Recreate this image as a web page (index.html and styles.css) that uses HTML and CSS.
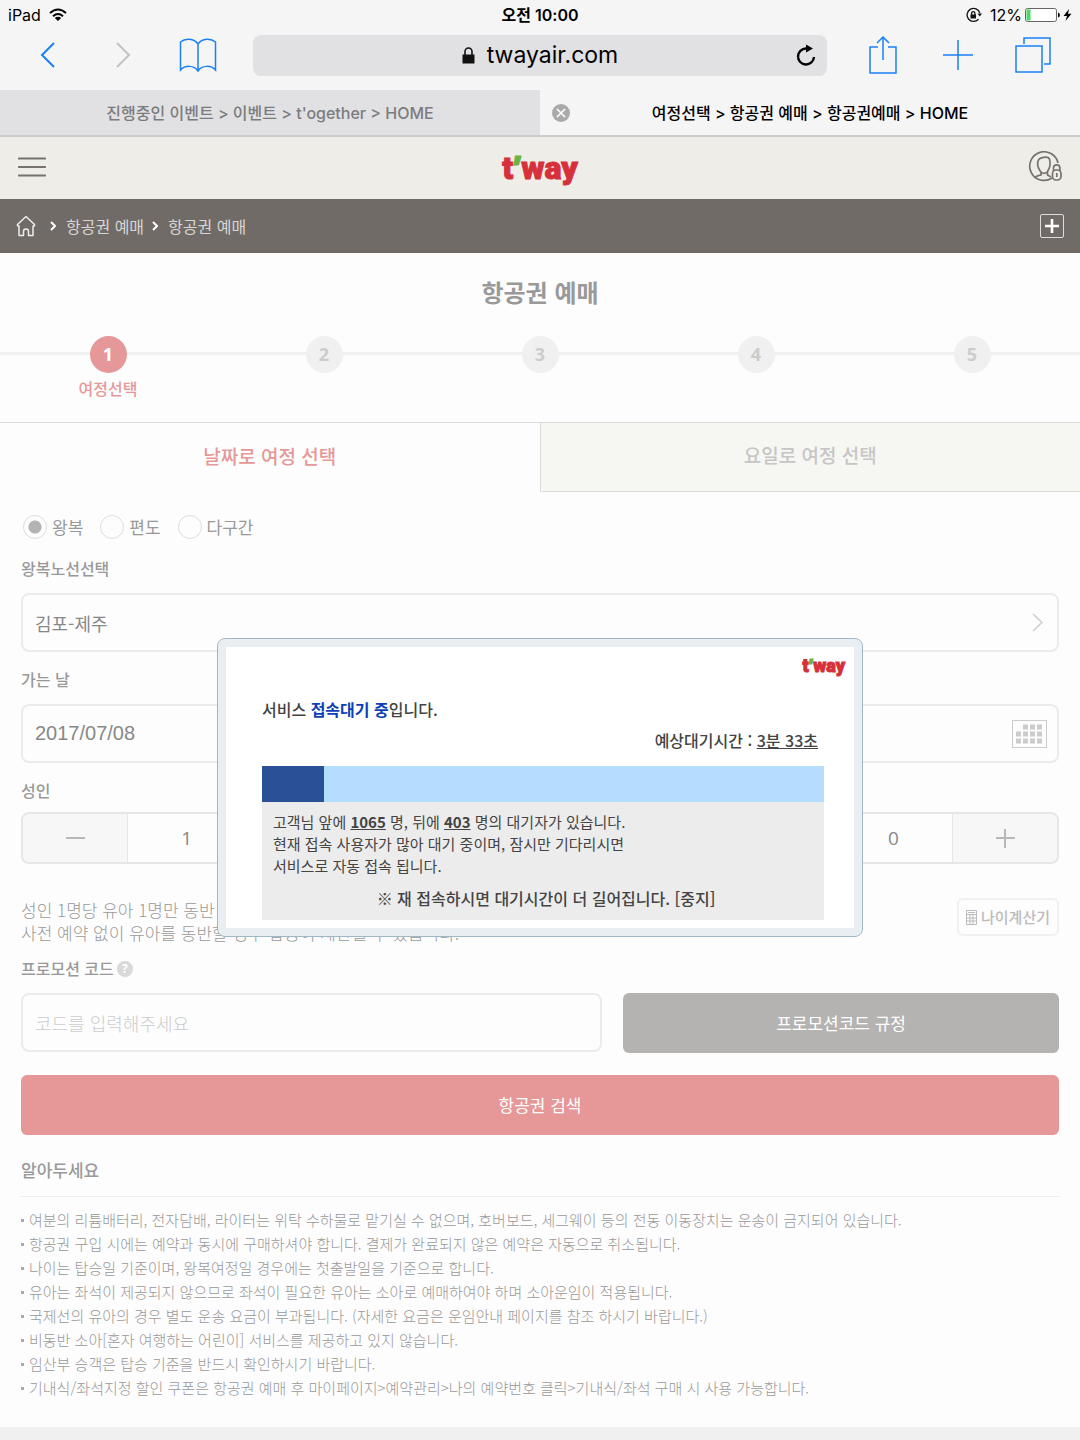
FILE: index.html
```html
<!DOCTYPE html>
<html lang="ko">
<head>
    <meta charset="UTF-8">
    <meta name="viewport" content="width=device-width, initial-scale=1.0">
    <title>여정선택 &gt; 항공권 예매 &gt; 항공권예매 &gt; HOME</title>
    <link rel="stylesheet" href="styles.css">
</head>
<body>
    <!-- 상태바 -->
    <div class="status">
        <div class="status-left">
            <span>iPad</span>
            <svg width="18" height="14" viewBox="0 0 18 14" fill="none" stroke="#000" stroke-width="2"><path d="M1 5Q9-2 17 5M4 8.200Q9 3.800 14 8.200"/><path d="M9 13L5.800 10Q9 7.400 12.200 10Z" fill="#000" stroke="none"/></svg>
        </div>
        <strong class="status-time">오전 10:00</strong>
        <div class="status-right">
            <svg class="rotate-lock" width="16" height="16" viewBox="0 0 16 16" fill="none" stroke="#111" stroke-width="1.300"><path d="M13.800 6A6.500 6.500 0 1 0 12.500 12.200"/><path d="M11.600 6.500H16L13.800 9.500Z" fill="#111" stroke="none"/><path d="M4.500 7.500h5.500v4h-5.500z" fill="#111" stroke="none"/><path d="M5.600 8V6.200a1.650 1.650 0 0 1 3.300 0V8"/></svg>
            <span>12%</span>
            <svg width="35" height="14" viewBox="0 0 35 14"><rect x=".5" y=".5" width="31" height="13" rx="2" fill="#fff" stroke="#666"/><path d="M1.500 1.500h4v11h-4z" fill="#4cd964"/><path d="M33 4.500q2 .5 2 2.500t-2 2.500z" fill="#111"/></svg>
            <svg width="9" height="14" viewBox="0 0 9 14"><path d="M6 1L.5 8H4L2.500 13L8.500 5.800H5Z" fill="#000"/></svg>
        </div>
    </div>

    <!-- 브라우저 도구막대 -->
    <div class="toolbar">
        <button class="tool" aria-label="뒤로"><svg width="16" height="28" viewBox="0 0 16 28" class="bold"><path d="M14 2L2 14L14 26"/></svg></button>
        <button class="tool off" aria-label="앞으로"><svg width="16" height="28" viewBox="0 0 16 28" class="bold"><path d="M2 2L14 14L2 26"/></svg></button>
        <button class="tool" aria-label="책갈피"><svg width="38" height="36" viewBox="0 0 38 36"><path d="M19 7C15 1 6 1 1.500 5V33C6 28 15 28 19 34C23 28 32 28 36.500 33V5C32 1 23 1 19 7V34"/></svg></button>
        <div class="address">
            <div class="address-url">
                <svg width="13" height="17" viewBox="0 0 13 17"><path d="M.5 7.500h12v9H.5z" fill="#111"/><path d="M3 8V4.500a3.500 3.500 0 0 1 7 0V8" fill="none" stroke="#111" stroke-width="1.600"/></svg>
                <span>twayair.com</span>
            </div>
            <button class="reload" aria-label="새로고침"><svg width="22" height="24" viewBox="0 0 22 24"><path d="M13 5.500H11A8 8 0 1 0 19 14" fill="none" stroke="#000" stroke-width="2.400"/><path d="M11 1.500L18 5.500L11 9.500Z"/></svg></button>
        </div>
        <button class="tool" aria-label="공유"><svg width="30" height="40" viewBox="0 0 30 40"><path d="M10 12H2V38H28V12H20M15 25V2M9 8L15 2L21 8"/></svg></button>
        <button class="tool" aria-label="새 탭"><svg width="30" height="30" viewBox="0 0 30 30"><path d="M15 0V30M0 15H30"/></svg></button>
        <button class="tool" aria-label="탭 보기"><svg width="36" height="36" viewBox="0 0 36 36"><path d="M1 9H27V35H1ZM9 7V1H35V27H29"/></svg></button>
    </div>

    <div class="browser-tabs">
        <div class="browser-tab"><span>진행중인 이벤트 &gt; 이벤트 &gt; t'ogether &gt; HOME</span></div>
        <div class="browser-tab current">
            <button class="tab-close" aria-label="탭 닫기"><svg width="18" height="18" viewBox="0 0 18 18"><circle cx="9" cy="9" r="9" fill="#aaa"/><path d="M5 5L13 13M13 5L5 13" stroke="#fff" stroke-width="1.700"/></svg></button>
            <span>여정선택 &gt; 항공권 예매 &gt; 항공권예매 &gt; HOME</span>
        </div>
    </div>

    <header class="header">
        <button class="menu-btn" aria-label="메뉴"><svg width="28" height="22" viewBox="0 0 28 22"><path d="M1 2.500H27M1 11H27M1 19.500H27" stroke="#77726e" stroke-width="2.200" stroke-linecap="round"/></svg></button>
        <a href="#" class="logo">t<span>’</span>way</a>
        <button class="user-btn" aria-label="로그인">
            <svg width="34" height="32" viewBox="0 0 34 32" fill="none" stroke="#77726e" stroke-width="1.700">
                <path d="M30 12A14.300 14.300 0 1 0 24 27"/>
                <path d="M10 10C11 6 20 5 21.500 8C22.500 12 22 17 19.500 20.500Q16 24 12.500 20.500C10 17 9 13 10 10ZM13 21V24Q8 25 6.500 27M19.500 21V24L23 26"/>
                <rect x="24.500" y="19" width="8.500" height="10" rx="3.500"/>
                <path d="M25.500 20V17a3.200 3.200 0 0 1 6.400 0v3M28.800 22v4"/>
            </svg>
        </button>
    </header>

    <nav class="breadcrumb">
        <a href="#" class="home" aria-label="홈"><svg width="20" height="22" viewBox="0 0 20 22" fill="none" stroke="#eee" stroke-width="1.500" stroke-linejoin="round"><path d="M10 1.500L1.500 9.500Q1 11 3 11V20.500H7.500V16.500Q7.500 14 10 14T12.500 16.500V20.500H17V11Q19 11 18.500 9.500Z"/></svg></a>
        <svg class="arrow" width="6" height="10" viewBox="0 0 6 10"><path d="M1 1L5 5L1 9"/></svg>
        <a href="#">항공권 예매</a>
        <svg class="arrow" width="6" height="10" viewBox="0 0 6 10"><path d="M1 1L5 5L1 9"/></svg>
        <a href="#">항공권 예매</a>
        <button class="more-btn" aria-label="더보기"><svg width="24" height="24" viewBox="0 0 24 24" fill="none" stroke="#fff"><rect x=".5" y=".5" width="23" height="23" rx="1.500" stroke="#ddd"/><path d="M12 5V19M5 12H19" stroke-width="2.600"/></svg></button>
    </nav>

    <main class="page">
        <h1 class="title">항공권 예매</h1>
        <ol class="steps">
            <li class="step on"><b>1</b><span>여정선택</span></li>
            <li class="step"><b>2</b></li>
            <li class="step"><b>3</b></li>
            <li class="step"><b>4</b></li>
            <li class="step"><b>5</b></li>
        </ol>
        <div class="tabs">
            <button class="tab on">날짜로 여정 선택</button>
            <button class="tab">요일로 여정 선택</button>
        </div>

        <form class="form">
            <div class="radios">
                <label><input type="radio" name="trip" checked>왕복</label>
                <label><input type="radio" name="trip">편도</label>
                <label><input type="radio" name="trip">다구간</label>
            </div>

            <label class="label" for="route">왕복노선선택</label>
            <div class="field">
                <select id="route"><option>김포-제주</option></select>
                <svg class="chevron" width="11" height="19" viewBox="0 0 11 19"><path d="M1 1L10 9.500L1 18" fill="none" stroke="#ccc" stroke-width="1.500"/></svg>
            </div>

            <label class="label" for="date">가는 날</label>
            <div class="field">
                <input type="text" id="date" class="latin" value="2017/07/08">
                <svg width="35" height="28" viewBox="0 0 35 28" stroke="#ccc" fill="none"><rect x=".5" y=".5" width="34" height="27"/><path d="M11 7H31" stroke-width="5" stroke-dasharray="5 2"/><path d="M4 14H31M4 21H31" stroke-width="5" stroke-dasharray="5 2"/></svg>
            </div>

            <div class="people">
                <div>
                    <label class="label" for="adult">성인</label>
                    <div class="counter">
                        <button type="button" class="minus" aria-label="성인 빼기"></button>
                        <input type="text" id="adult" value="1">
                        <button type="button" class="plus" aria-label="성인 더하기"></button>
                    </div>
                </div>
                <div>
                    <label class="label" for="child">소아</label>
                    <div class="counter">
                        <button type="button" class="minus" aria-label="소아 빼기"></button>
                        <input type="text" id="child" value="0">
                        <button type="button" class="plus" aria-label="소아 더하기"></button>
                    </div>
                </div>
                <div>
                    <label class="label" for="infant">유아</label>
                    <div class="counter">
                        <button type="button" class="minus" aria-label="유아 빼기"></button>
                        <input type="text" id="infant" value="0">
                        <button type="button" class="plus" aria-label="유아 더하기"></button>
                    </div>
                </div>
            </div>

            <div class="notice">
                <p>성인 1명당 유아 1명만 동반 가능합니다.<br>사전 예약 없이 유아를 동반할 경우 탑승이 제한될 수 있습니다.</p>
                <button type="button" class="age-btn"><svg width="11" height="15" viewBox="0 0 11 15" fill="none" stroke="#bbb"><path d="M.5.5h10v14H.5zM.5 4.500h10M.5 8h10M.5 11h10M4 4.500v10M7 4.500v10M2 2.500h7"/></svg>나이계산기</button>
            </div>

            <div class="promo-label">
                <label class="label" for="promo">프로모션 코드</label>
                <button type="button" class="help" aria-label="도움말">?</button>
            </div>
            <div class="promo">
                <div class="field"><input type="text" id="promo" placeholder="코드를 입력해주세요"></div>
                <button type="button" class="btn gray">프로모션코드 규정</button>
            </div>
            <button type="button" class="btn red">항공권 검색</button>
        </form>

        <section class="info">
            <h2>알아두세요</h2>
            <ul>
                <li>여분의 리튬배터리, 전자담배, 라이터는 위탁 수하물로 맡기실 수 없으며, 호버보드, 세그웨이 등의 전동 이동장치는 운송이 금지되어 있습니다.</li>
                <li>항공권 구입 시에는 예약과 동시에 구매하셔야 합니다. 결제가 완료되지 않은 예약은 자동으로 취소됩니다.</li>
                <li>나이는 탑승일 기준이며, 왕복여정일 경우에는 첫출발일을 기준으로 합니다.</li>
                <li>유아는 좌석이 제공되지 않으므로 좌석이 필요한 유아는 소아로 예매하여야 하며 소아운임이 적용됩니다.</li>
                <li>국제선의 유아의 경우 별도 운송 요금이 부과됩니다. (자세한 요금은 운임안내 페이지를 참조 하시기 바랍니다.)</li>
                <li>비동반 소아[혼자 여행하는 어린이] 서비스를 제공하고 있지 않습니다.</li>
                <li>임산부 승객은 탑승 기준을 반드시 확인하시기 바랍니다.</li>
                <li>기내식/좌석지정 할인 쿠폰은 항공권 예매 후 마이페이지&gt;예약관리&gt;나의 예약번호 클릭&gt;기내식/좌석 구매 시 사용 가능합니다.</li>
            </ul>
        </section>

        <!-- 접속대기 팝업 -->
        <div class="popup" role="dialog" aria-label="접속대기">
            <div class="logo small">t<span>’</span>way</div>
            <div class="popup-body">
                <p class="popup-title">서비스 <em>접속대기 중</em>입니다.</p>
                <p class="popup-time">예상대기시간 : <u>3분 33초</u></p>
                <div class="bar"><div class="bar-fill" style="width: 11%"></div></div>
                <div class="popup-msg">
                    <p>고객님 앞에 <u>1065</u> 명, 뒤에 <u>403</u> 명의 대기자가 있습니다.<br>현재 접속 사용자가 많아 대기 중이며, 잠시만 기다리시면<br>서비스로 자동 접속 됩니다.</p>
                    <p class="popup-warn">※ 재 접속하시면 대기시간이 더 길어집니다. <a href="#">[중지]</a></p>
                </div>
            </div>
        </div>
    </main>
    <footer class="footer"></footer>
</body>
</html>
```
FILE: styles.css
```css
* {
    margin: 0;
    padding: 0;
    box-sizing: border-box;
}
body {
    min-height: 100vh;
    display: flex;
    flex-direction: column;
    background-color: #fdfdfd;
    font-family: "Noto Sans CJK KR", sans-serif;
    font-size: 16px;
    line-height: 24px;
    color: #999;
}
button, input, select {
    font: inherit;
    color: inherit;
    border: 0;
    background: none;
    outline: none;
    appearance: none;
}
button {
    cursor: pointer;
}
a {
    color: inherit;
    text-decoration: none;
}
svg {
    display: block;
    flex-shrink: 0;
}

/* 브라우저 */
.status, .toolbar, .browser-tabs {
    background-color: #f5f5f6;
    color: #000;
    font-family: Inter, "Noto Sans CJK KR", sans-serif;
}
.status {
    height: 30px;
    padding: 0 8px;
    display: grid;
    grid-template-columns: 1fr auto 1fr;
    align-items: center;
}
.status-left, .status-right {
    display: flex;
    align-items: center;
    gap: 8px;
}
.status-time {
    font-weight: 600;
}
.status-right {
    justify-content: flex-end;
    gap: 3px;
}
.rotate-lock {
    margin-right: 5px;
}
.toolbar {
    height: 60px;
    padding: 0 10px 10px;
    display: flex;
    align-items: center;
}
.tool {
    width: 75px;
    height: 44px;
    display: flex;
    align-items: center;
    justify-content: center;
}
.tool svg {
    fill: none;
    stroke: #1a80f5;
    stroke-width: 1.5;
}
.tool .bold {
    stroke-width: 2;
}
.off .bold {
    stroke: #c3c3c5;
}
.address {
    flex: 1;
    height: 41px;
    margin: 0 18px;
    display: flex;
    align-items: center;
    border-radius: 8px;
    background-color: #e1e1e3;
}
.address-url {
    flex: 1;
    padding-left: 32px;
    display: flex;
    align-items: center;
    justify-content: center;
    gap: 12px;
    font-size: 23px;
}
.reload {
    margin-right: 10px;
}
.browser-tabs {
    height: 47px;
    display: grid;
    grid-template-columns: 1fr 1fr;
    border-bottom: 2px solid #ccc;
}
.browser-tab {
    display: flex;
    align-items: center;
    justify-content: center;
    background-color: #e1e1e3;
    color: #7c7c7e;
    font-weight: 500;
}
.current {
    padding: 0 30px 0 12px;
    background-color: #f5f5f6;
    color: #000;
}
.current span {
    flex: 1;
    text-align: center;
}

/* 헤더 */
.header {
    height: 62px;
    padding: 0 18px 2px;
    display: grid;
    grid-template-columns: 1fr auto 1fr;
    align-items: center;
    background-color: #eeede8;
}
.menu-btn {
    justify-self: start;
}
.user-btn {
    justify-self: end;
}
.logo {
    font-family: Roboto, sans-serif;
    font-size: 32px;
    line-height: 40px;
    font-weight: 900;
    color: #d6303a;
    -webkit-text-stroke: 1px #d6303a;
}
.logo span {
    font-family: "Open Sans", sans-serif;
    font-weight: 800;
    color: #6cb33f;
    -webkit-text-stroke: 1px #6cb33f;
}
.breadcrumb {
    height: 54px;
    padding: 0 16px;
    display: flex;
    align-items: center;
    background-color: #706b67;
    color: #d8d6d4;
}
.home {
    margin-right: 6px;
}
.arrow {
    margin: 0 10px 0 8px;
    fill: none;
    stroke: #fff;
    stroke-width: 2;
}
.more-btn {
    margin-left: auto;
}

/* 본문 */
.page {
    flex: 1;
    position: relative;
}
.title {
    padding: 24px 0;
    font-size: 24px;
    line-height: 30px;
    font-weight: 700;
    text-align: center;
}
.steps {
    height: 91px;
    padding-top: 5px;
    display: flex;
    list-style: none;
    background: linear-gradient(#f0f0f0, #f0f0f0) 0 21px / 100% 3px no-repeat;
}
.step {
    flex: 1;
    display: flex;
    flex-direction: column;
    align-items: center;
    gap: 3px;
    font-weight: 500;
}
.step b {
    width: 37px;
    height: 37px;
    border-radius: 50%;
    background-color: #f0f0f0;
    color: #ccc;
    font-family: "Open Sans", sans-serif;
    font-size: 18px;
    line-height: 37px;
    text-align: center;
}
.step.on {
    color: #e69898;
}
.step.on b {
    background-color: #e69898;
    color: #fff;
}
.tabs {
    height: 70px;
    display: flex;
    border-top: 1px solid #ddddd9;
}
.tab {
    flex: 1;
    padding-bottom: 4px;
    font-size: 19px;
    font-weight: 500;
    color: #c6c6c4;
    background-color: #f6f6f3;
    border-left: 1px solid #ddddd9;
    border-bottom: 1px solid #ddddd9;
}
.tab.on {
    color: #e69898;
    background: none;
    border: 0;
}
.form, .info {
    padding: 0 21px;
}
.radios {
    padding: 23px 2px 17px;
    display: flex;
    gap: 17px;
    font-size: 17px;
}
.radios label {
    display: flex;
    align-items: center;
    gap: 5px;
}
.radios input {
    width: 24px;
    height: 24px;
    border: 1px solid #ddd;
    border-radius: 50%;
}
.radios input:checked {
    background: radial-gradient(#b3b3b1 6px, transparent 7px);
}
.label {
    display: block;
    margin-bottom: 13px;
    font-weight: 500;
}
.field {
    height: 59px;
    margin-bottom: 15px;
    padding: 0 10px 0 12px;
    display: flex;
    align-items: center;
    border: 2px solid #ebebeb;
    border-radius: 8px;
    font-size: 18px;
    color: #888;
}
.field select, .field input {
    flex: 1;
    min-width: 0;
    height: 100%;
}
.field .latin {
    font-family: "Liberation Sans", sans-serif;
    font-size: 20px;
}
.field input::placeholder {
    color: #ccc;
    font-weight: 300;
}
.chevron {
    margin-right: 4px;
}
.people {
    display: grid;
    grid-template-columns: repeat(3, 1fr);
    gap: 22px;
}
.people .label {
    margin-bottom: 10px;
}
.counter {
    height: 52px;
    display: grid;
    grid-template-columns: 104px 1fr 104px;
    border: 2px solid #e6e6e6;
    border-radius: 8px;
    overflow: hidden;
    font-family: "Open Sans", sans-serif;
    font-size: 19px;
    color: #888;
}
.counter input {
    min-width: 0;
    text-align: center;
    border: solid #e6e6e6;
    border-width: 0 1px;
}
.minus, .plus {
    background: linear-gradient(#b8b8b8, #b8b8b8) center / 19px 2px no-repeat #f7f7f7;
}
.plus {
    background: linear-gradient(#b8b8b8, #b8b8b8) center / 19px 2px no-repeat, linear-gradient(#b8b8b8, #b8b8b8) center / 2px 19px no-repeat #f7f7f7;
}
.notice {
    padding: 34px 0 12px;
    display: flex;
    justify-content: space-between;
    align-items: flex-start;
}
.notice p {
    font-size: 17px;
    line-height: 23px;
    font-weight: 300;
}
.age-btn {
    height: 38px;
    padding: 0 7px;
    display: flex;
    align-items: center;
    gap: 4px;
    border: 2px solid #f0f0f0;
    border-radius: 6px;
    font-size: 15px;
    font-weight: 500;
    color: #bbb;
}
.promo-label {
    display: flex;
    gap: 3px;
}
.help {
    width: 16px;
    height: 16px;
    margin-top: 5px;
    border-radius: 50%;
    background-color: #d9d9d9;
    color: #fff;
    font-family: "Open Sans", sans-serif;
    font-size: 12px;
    line-height: 16px;
    font-weight: 700;
}
.promo {
    margin-bottom: 22px;
    display: grid;
    grid-template-columns: 4fr 3fr;
    gap: 21px;
}
.promo .field {
    margin: 0;
}
.btn {
    height: 60px;
    border-radius: 6px;
    font-size: 17px;
    color: #fff;
}
.gray {
    background-color: #b4b3b1;
}
.red {
    width: 100%;
    background-color: #e69898;
}

/* 알아두세요 */
.info {
    padding-top: 23px;
}
.info h2 {
    padding-bottom: 14px;
    border-bottom: 1px solid #eee;
    font-size: 17px;
    font-weight: 500;
}
.info ul {
    padding: 11px 0 20px;
    list-style: none;
    font-size: 15px;
    font-weight: 300;
}
.info li {
    display: flex;
    align-items: center;
    gap: 5px;
}
.info li::before {
    content: "";
    width: 3px;
    height: 3px;
    flex-shrink: 0;
    background-color: #aaa;
}
.footer {
    height: 13px;
    background-color: #f0f0f0;
}

/* 팝업 */
.popup {
    position: absolute;
    top: 385px;
    left: 50%;
    width: 646px;
    max-width: 100%;
    transform: translate(-50%, 0);
    border: 1px solid #a0b8c6;
    border-radius: 8px;
    background-color: #fff;
    box-shadow: inset 0 0 0 8px #e9eef2;
    color: #444;
}
.small {
    padding: 14px 17px 0 0;
    font-size: 18px;
    line-height: 24px;
    text-align: right;
}
.popup-body {
    padding: 19px 38px 16px 44px;
}
.popup-title, .popup-time {
    font-weight: 500;
}
.popup-title em {
    font-style: normal;
    font-weight: 700;
    color: #0c3fb8;
}
.popup-time {
    padding: 7px 6px 14px 0;
    text-align: right;
}
.bar {
    height: 36px;
    background-color: #b5ddff;
}
.bar-fill {
    height: 100%;
    background-color: #2a5098;
}
.popup-msg {
    padding: 9px 11px 11px;
    background-color: #ececec;
    font-size: 15px;
    line-height: 22px;
}
.popup-msg u {
    font-weight: 700;
}
.popup-warn {
    padding: 10px 0 0 6px;
    font-size: 16px;
    font-weight: 500;
    text-align: center;
}
```
